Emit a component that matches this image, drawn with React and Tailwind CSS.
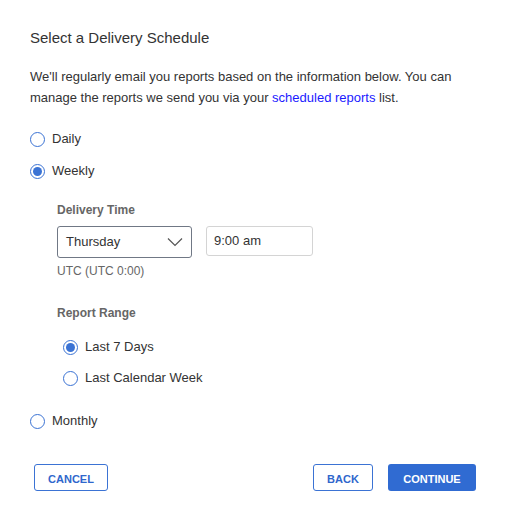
import React from 'react';

function Radio({ checked, label }) {
  return (
    <label className="flex items-center h-5 gap-[7px] text-[13px] text-[#333]">
      <span className="w-[15px] h-[15px] rounded-full border border-[#3b73d4] flex items-center justify-center bg-white">
        {checked && <span className="w-[9px] h-[9px] rounded-full bg-[#3b73d4]" />}
      </span>
      {label}
    </label>
  );
}

export default function App() {
  return (
    <div className="w-[510px] h-[524px] bg-white pl-[30px] pr-[34px] pt-[28px] flex flex-col" style={{ fontFamily: '"Liberation Sans", Arial, sans-serif' }}>
      <h1 className="text-[15px] leading-5 text-[#333]">Select a Delivery Schedule</h1>
      <p className="mt-[18px] text-[13px] leading-[21px] text-[#333]">
        We'll regularly email you reports based on the information below. You can manage the reports we send you via your{' '}
        <a className="text-[#1a1aff]">scheduled reports</a> list.
      </p>

      <div className="mt-[21px] flex flex-col gap-3">
        <Radio label="Daily" />
        <Radio checked label="Weekly" />
      </div>

      {/* Weekly options */}
      <div className="pl-[27px]">
        <div className="mt-[21px] text-[12px] leading-4 font-bold text-[#666]">Delivery Time</div>
        <div className="mt-2 flex items-start gap-[14px]">
          <div className="w-[135px] h-[32px] border border-[#707885] rounded-[3px] flex items-center justify-between pl-[8px] pr-[6px] text-[13px] text-[#333]">
            Thursday
            <svg width="20" height="12" viewBox="0 0 20 12" fill="none" stroke="#555" strokeWidth="1.2">
              <path d="M3 2.5 L10 9.5 L17 2.5" />
            </svg>
          </div>
          <div className="w-[107px] h-[30px] border border-[#d4d4d4] rounded-[3px] flex items-center pl-[7px] text-[13px] text-[#333]">
            9:00 am
          </div>
        </div>
        <div className="mt-[5px] text-[12px] leading-4 text-[#666]">UTC (UTC 0:00)</div>

        <div className="mt-[26px] text-[12px] leading-4 font-bold text-[#666]">Report Range</div>
        <div className="mt-4 pl-[6px] flex flex-col gap-[11px]">
          <Radio checked label="Last 7 Days" />
          <Radio label="Last Calendar Week" />
        </div>
      </div>

      <div className="mt-[23px]">
        <Radio label="Monthly" />
      </div>

      <div className="mt-[33px] pl-[4px] flex items-center justify-between">
        <button className="w-[74px] h-[27px] pt-[4px] border border-[#3b73d4] rounded-[3px] text-[11px] font-bold text-[#2f67cc]">CANCEL</button>
        <div className="flex gap-[15px]">
          <button className="w-[60px] h-[27px] pt-[4px] border border-[#3b73d4] rounded-[3px] text-[11px] font-bold text-[#2f67cc]">BACK</button>
          <button className="w-[88px] h-[27px] pt-[4px] bg-[#306bd2] rounded-[3px] text-[11px] font-bold text-white">CONTINUE</button>
        </div>
      </div>
    </div>
  );
}
